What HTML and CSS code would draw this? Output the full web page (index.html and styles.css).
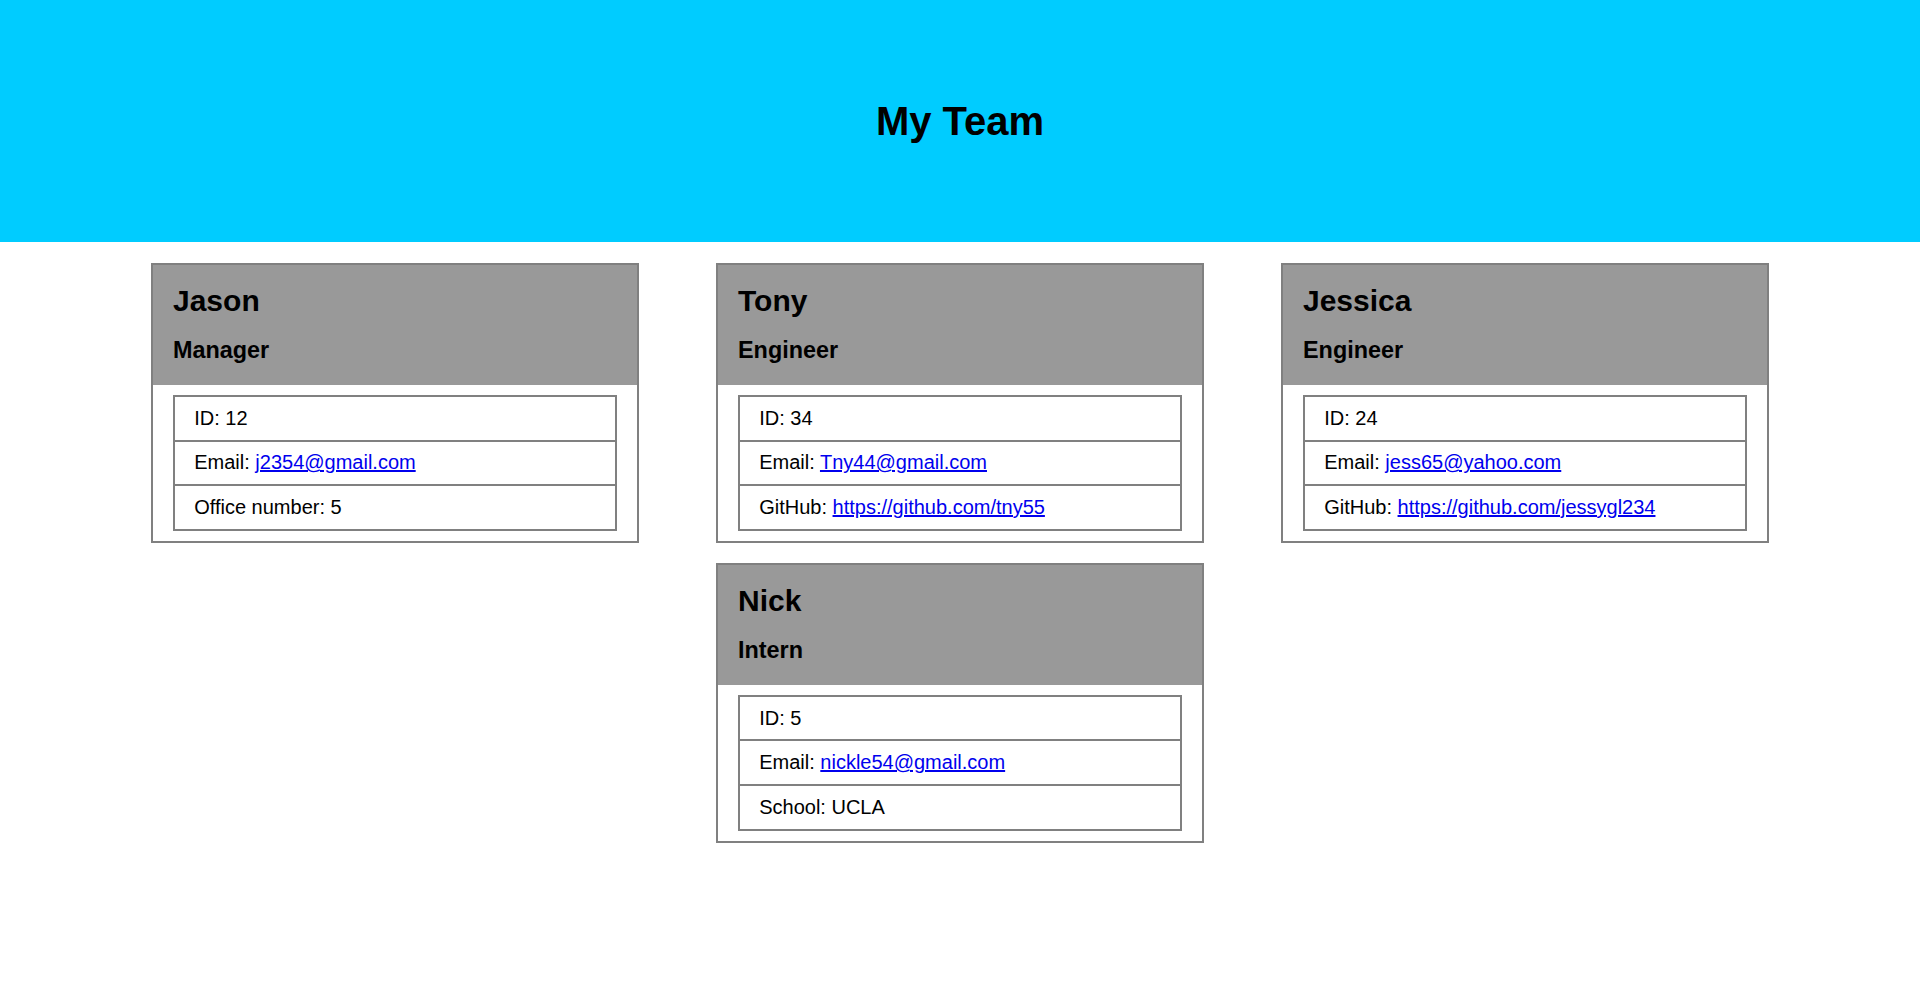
FILE: index.html
```html
<!DOCTYPE html>
<html lang="en">
<head>
<meta charset="UTF-8">
<title>My Team</title>
<link rel="stylesheet" href="styles.css">
</head>
<body>
<header class="banner">
  <h1 class="banner-title">My Team</h1>
</header>
<main class="team">
  <section class="card">
    <div class="card-head">
      <h2 class="card-name">Jason</h2>
      <h3 class="card-role">Manager</h3>
    </div>
    <div class="card-body">
      <ul class="info">
        <li class="info-row">ID: 12</li>
        <li class="info-row">Email: <a href="mailto:j2354@gmail.com">j2354@gmail.com</a></li>
        <li class="info-row">Office number: 5</li>
      </ul>
    </div>
  </section>
  <section class="card">
    <div class="card-head">
      <h2 class="card-name">Tony</h2>
      <h3 class="card-role">Engineer</h3>
    </div>
    <div class="card-body">
      <ul class="info">
        <li class="info-row">ID: 34</li>
        <li class="info-row">Email: <a href="mailto:Tny44@gmail.com">Tny44@gmail.com</a></li>
        <li class="info-row">GitHub: <a href="#">https://github.com/tny55</a></li>
      </ul>
    </div>
  </section>
  <section class="card">
    <div class="card-head">
      <h2 class="card-name">Jessica</h2>
      <h3 class="card-role">Engineer</h3>
    </div>
    <div class="card-body">
      <ul class="info">
        <li class="info-row">ID: 24</li>
        <li class="info-row">Email: <a href="mailto:jess65@yahoo.com">jess65@yahoo.com</a></li>
        <li class="info-row">GitHub: <a href="#">https://github.com/jessygl234</a></li>
      </ul>
    </div>
  </section>
  <section class="card">
    <div class="card-head">
      <h2 class="card-name">Nick</h2>
      <h3 class="card-role">Intern</h3>
    </div>
    <div class="card-body">
      <ul class="info">
        <li class="info-row">ID: 5</li>
        <li class="info-row">Email: <a href="mailto:nickle54@gmail.com">nickle54@gmail.com</a></li>
        <li class="info-row">School: UCLA</li>
      </ul>
    </div>
  </section>
</main>
</body>
</html>
```

FILE: styles.css
```css
* {
  box-sizing: border-box;
}

html, body {
  margin: 0;
  padding: 0;
  background: #ffffff;
}

body {
  font-family: "Liberation Sans", Arial, sans-serif;
  font-size: 20px;
  color: #000000;
}

.banner {
  height: 242px;
  background: #00ccff;
  display: flex;
  align-items: center;
  justify-content: center;
}

.banner-title {
  margin: 0;
  font-size: 40px;
  font-weight: bold;
  line-height: normal;
}

.team {
  display: flex;
  flex-wrap: wrap;
  justify-content: center;
  column-gap: 77px;
  row-gap: 20px;
  padding-top: 21px;
}

.card {
  width: 488px;
  border: 2px solid #808080;
  background: #ffffff;
}

.card-head {
  background: #999999;
  padding: 18.8px 20px 0;
  height: 120px;
}

.card-name {
  margin: 0;
  font-size: 30px;
  font-weight: bold;
  line-height: normal;
}

.card-role {
  margin: 19px 0 0;
  font-size: 23.4px;
  font-weight: bold;
  line-height: normal;
}

.card-body {
  padding: 10px 20px;
}

.info {
  list-style: none;
  margin: 0;
  padding: 0;
  border: 2px solid #808080;
}

.info-row {
  font-size: 20px;
  line-height: normal;
  padding: 9.8px 19.2px;
  border-top: 2px solid #808080;
}

.info-row:first-child {
  border-top: none;
}

.info-row a {
  color: #0000ee;
  text-decoration: underline;
}
```
